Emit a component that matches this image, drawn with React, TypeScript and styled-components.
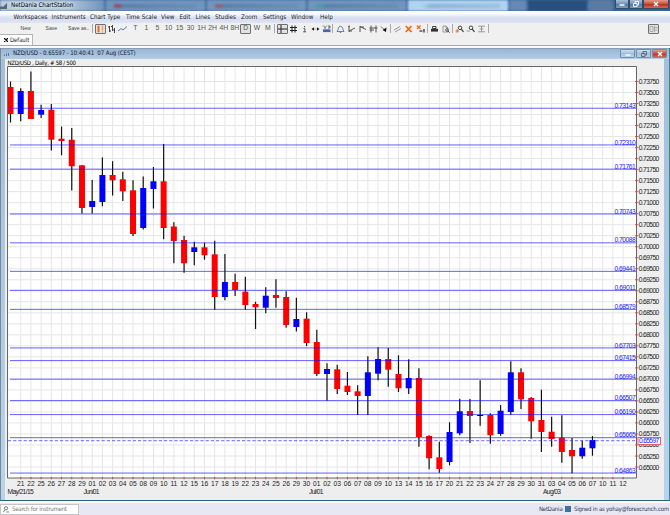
import React from "react";
import styled, { createGlobalStyle } from "styled-components";

const Global = createGlobalStyle`
  * { box-sizing: border-box; }
  body { margin: 0; overflow: hidden; background: #f0f0f0; }
`;

const ui = `"DejaVu Sans Condensed", "DejaVu Sans", sans-serif`;

const Window = styled.div`
  width: 670px;
  height: 515px;
  display: flex;
  flex-direction: column;
  background: #f0f0f0;
  font-family: ${ui};
  font-stretch: condensed;
  font-size: 6.3px;
  line-height: 1;
  color: #1b1b1b;
  white-space: nowrap;
`;

const TitleBar = styled.header`
  position: relative;
  flex: none;
  height: 11px;
  overflow: hidden;
  display: flex;
  justify-content: space-between;
  background: linear-gradient(#3f6a9c, #4d79aa 70%, #3a6492);
`;

const Backdrop = styled.div`
  position: absolute;
  inset: 0;
  display: flex;
  gap: 2px;
  filter: blur(1px);
`;

const GlassTab = styled.div<{ $w: number; $c: string }>`
  flex: none;
  width: ${(p) => p.$w}px;
  height: 11px;
  padding: 4px 8px 0 8px;
  background: ${(p) => p.$c};
`;

const Smudge = styled.div<{ $c: string }>`
  height: 4px;
  background: ${(p) => p.$c};
`;

const AppTitle = styled.div`
  position: relative;
  display: flex;
  align-items: center;
  gap: 3px;
  height: 11px;
  font-size: 6.3px;
  letter-spacing: -0.08px;
  color: #000;
  text-shadow: 0 0 4px #fff, 0 0 4px #dfeaf6;
`;

const WindowButtons = styled.div`
  position: relative;
  display: flex;
  width: 54px;
  height: 9px;
  margin-right: 1px;
`;

const WinButton = styled.button<{ $w: number; $close?: boolean; $light?: boolean }>`
  width: ${(p) => p.$w}px;
  height: 9px;
  padding: 0;
  border: 1px solid ${(p) => (p.$light ? "#6f8fae" : "#2d4c6e")};
  border-top-width: ${(p) => (p.$light ? 1 : 0)}px;
  border-radius: ${(p) => (p.$light ? "1px" : "0 0 2px 2px")};
  display: flex;
  align-items: center;
  justify-content: center;
  background: ${(p) =>
    p.$close
      ? "linear-gradient(#e09a88, #c8503c 50%, #b83222 55%, #d46a50)"
      : p.$light
        ? "linear-gradient(#cfdff0, #a3bfdb 50%, #b9d0e8)"
        : "linear-gradient(#a9bfd6, #7391b2 50%, #5a7ba0 55%, #7c9cbd)"};
`;

const MenuBar = styled.nav`
  flex: none;
  height: 12px;
  padding-left: 13.5px;
  display: flex;
  align-items: center;
  background: linear-gradient(#ffffff, #f4f6fb 30%, #dde3f2 50%, #d6ddef 70%, #dfe5f5);
`;

const MenuItem = styled.span<{ $w: number }>`
  flex: none;
  width: ${(p) => p.$w}px;
`;

const Toolbar = styled.div`
  flex: none;
  height: 11px;
  display: flex;
  align-items: center;
  font-family: "Liberation Sans", Arial, sans-serif;
`;

const TextButton = styled.span<{ $w: number }>`
  flex: none;
  width: ${(p) => p.$w}px;
  font-size: 5.1px;
  color: #444;
`;

const ToolGroup = styled.div<{ $ml?: number }>`
  flex: none;
  display: flex;
  margin-left: ${(p) => p.$ml ?? 0}px;
`;

const Tool = styled.span<{ $on?: boolean }>`
  flex: none;
  width: 11.05px;
  height: 10px;
  display: flex;
  align-items: center;
  justify-content: center;
  font-size: 6.8px;
  color: #555;
  border: ${(p) => (p.$on ? "1px solid #6f6f6f" : "0")};
  border-radius: 1px;
  background: ${(p) => (p.$on ? "#e2e2e2" : "none")};
`;

const Divider = styled.i<{ $ml?: number }>`
  flex: none;
  width: 1px;
  height: 9px;
  margin-left: ${(p) => p.$ml ?? 0}px;
  background: #a9a9a9;
`;

const TabStrip = styled.div`
  flex: none;
  height: 12px;
  display: flex;
  align-items: flex-end;
  border-bottom: 1px solid #a8a8a8;
`;

const Tab = styled.div`
  width: 33px;
  height: 11px;
  padding-left: 4px;
  display: flex;
  align-items: center;
  gap: 2px;
  font-size: 6px;
  letter-spacing: -0.08px;
  background: #fff;
  border: 1px solid #b5b5b5;
  border-left: 0;
  border-bottom: 0;
`;

const ChartWindow = styled.section`
  flex: none;
  height: 453px;
  display: flex;
  flex-direction: column;
  border-left: 1px solid #7d8790;
  border-right: 1px solid #3d8494;
  border-bottom: 1px solid #2c6470;
  background: linear-gradient(#a3bedb, #b9d3ee);
`;

const ChartTitle = styled.div`
  flex: none;
  height: 11px;
  padding: 0 2px 0 3px;
  display: flex;
  align-items: center;
  gap: 3px;
  font-size: 6.1px;
  letter-spacing: -0.1px;
  color: #15202c;
  background: linear-gradient(#7f93a8 0, #9ab7d5 1.5px, #b3cce6);
`;

const ChartButtons = styled.div`
  margin-left: auto;
  display: flex;
  gap: 1px;
`;

const ChartBody = styled.div`
  flex: 1;
  margin: 0 5px 0 4px;
  background: #eeeeee;
`;

const Spacer = styled.div`
  flex: none;
  height: 2px;
  background: #fafafa;
`;

const StatusBar = styled.footer`
  flex: 1;
  display: flex;
  align-items: center;
  justify-content: space-between;
  padding-right: 1px;
  font-size: 6px;
  background: #e8e8f5;
`;

const SearchBox = styled.div`
  width: 79px;
  height: 11px;
  padding-left: 2px;
  display: flex;
  align-items: center;
  gap: 3px;
  border: 1px solid #c3c3cc;
  background: #fff;
  color: #777;
  letter-spacing: -0.2px;
`;

const Account = styled.div`
  display: flex;
  align-items: center;
  gap: 2px;
  color: #2a3550;
  letter-spacing: -0.2px;
`;

const Swatch = styled.i`
  width: 6px;
  height: 6px;
  background: #41719f;
`;

type Candle = [string, number, number, number, number];

/* colour, high, body top, body bottom, low */
const candles: Candle[] = [
  ["r", 81.5, 87, 114, 122.5], ["b", 88.3, 91, 114, 121.3], ["r", 71.5, 91, 119, 119],
  ["b", 104.7, 110, 114.7, 118], ["r", 104, 109.7, 139.7, 150.5], ["r", 126.5, 138.7, 141, 155.3],
  ["r", 128, 139.7, 166.3, 190.5], ["r", 165, 165.3, 208, 213.5], ["b", 180, 201, 207, 213.5],
  ["b", 157.5, 175, 202, 206.3], ["r", 161.3, 175, 180.3, 195.5], ["r", 171.7, 179.3, 191.3, 201],
  ["r", 180.3, 190.3, 234, 236], ["b", 176.5, 188, 228, 229.5], ["b", 167, 181.3, 189, 208.5],
  ["r", 144, 181.3, 228, 239.3], ["r", 222.3, 226.5, 241, 263.3], ["r", 235.7, 240, 263.3, 272.7],
  ["b", 241.7, 247.3, 252, 265.3], ["r", 242.7, 247.3, 255.3, 259.7], ["r", 240.7, 254.3, 297, 309.7],
  ["b", 254, 282, 297, 300.3], ["r", 273.7, 282, 290, 296], ["r", 276.7, 291.7, 305, 309.7],
  ["r", 301.7, 304, 307.3, 329], ["b", 287.3, 295.7, 307.7, 313.3], ["r", 279.3, 295, 298, 307.7],
  ["r", 291.3, 297, 325, 327.7], ["b", 297.7, 319, 327, 331.5], ["r", 312.3, 318.7, 343, 346],
  ["r", 329.7, 342, 374, 376], ["b", 363.3, 369, 374, 400.7], ["r", 364.7, 369.3, 389, 394],
  ["r", 372, 385.7, 392, 395], ["r", 385.3, 391.3, 396, 415], ["b", 356.3, 372.3, 396, 415],
  ["b", 347.3, 359, 373.7, 380.3], ["r", 348, 359, 369.7, 386.7], ["r", 355.3, 374, 388.3, 392],
  ["b", 359.3, 378, 388.3, 394], ["r", 368.3, 378, 437, 446.7], ["r", 435.3, 436, 458.3, 469.3],
  ["r", 441.7, 457.3, 469, 472.7], ["b", 422.3, 432, 462, 465.3], ["b", 398.7, 411.3, 433.3, 435.3],
  ["r", 399, 411, 416, 443], ["k", 380.3, 415, 416, 425.7], ["r", 413.3, 415, 435.3, 443.7],
  ["b", 405, 410.7, 434, 435.7], ["b", 361.3, 372.3, 412, 414.7], ["r", 368.3, 372.3, 399.3, 409],
  ["r", 397, 398, 421.3, 438.7], ["r", 389.7, 420, 432, 452], ["r", 416.7, 431.7, 439, 446.7],
  ["r", 415.3, 437.7, 452, 462.7], ["r", 438, 450, 456.3, 473.3], ["b", 440.7, 447.7, 456.3, 458.7],
  ["b", 436, 440, 448.3, 455.7],
];

const fills: Record<string, string> = { r: "#ff0000", b: "#0000ff", k: "#000000" };

const days = (
  "21 22 25 26 27 28 29 01 02 03 04 05 08 09 10 11 12 15 16 17 18 19 22 23 24 25 26 29 30 " +
  "01 02 03 06 07 08 09 10 13 14 15 16 17 20 21 22 23 24 27 28 29 30 31 03 04 05 06 07 10 11 12"
).split(" ");

const levels = [
  "0.73143", "0.72310", "0.71761", "0.70743", "0.70088", "0.69441", "0.69011", "0.68579",
  "0.67703", "0.67415", "0.66994", "0.66507", "0.66190", "0.65665", "0.64863",
];

const xAt = (i: number) => 10.5 + i * 10.21;
const yAt = (price: number) => 81.5 + ((0.7375 - price) / 0.0025) * 11.015;

const ticks = Array.from({ length: 36 }, (_, i) => 0.7375 - i * 0.0025);

const ChartSvg = styled.svg`
  display: block;
  font-family: "Liberation Sans", Arial, sans-serif;
  font-size: 6.7px;
`;

const PriceChart = () => (
  <ChartSvg width="659" height="441" viewBox="5 59 659 441">
    <text x="7.5" y="65" textLength="68.5" fill="#000" fontFamily="DejaVu Sans Condensed, DejaVu Sans" fontSize="6">
      NZD/USD , Daily, # 58 / 500
    </text>
    <rect x="7.5" y="66.5" width="629" height="411.5" fill="#fff" />
    {ticks.map((p) => (
      <line key={p} x1="8" x2="636" y1={yAt(p)} y2={yAt(p)} stroke="#e6e6e6" />
    ))}
    {days.map((_, i) => (
      <line key={i} x1={xAt(i + 1)} x2={xAt(i + 1)} y1="67" y2="478" stroke="#e6e6e6" />
    ))}
    {candles.map(([c, hi, top, bottom, lo], i) => (
      <g key={i}>
        <line x1={xAt(i)} x2={xAt(i)} y1={hi} y2={lo} stroke="#111" strokeWidth="1.2" />
        <rect x={xAt(i) - 3} width="6" y={top} height={bottom - top} fill={fills[c]} />
      </g>
    ))}
    {levels.map((l) => (
      <g key={l}>
        <line x1="10" x2="636" y1={yAt(+l)} y2={yAt(+l)} stroke="#0000ff" strokeOpacity="0.62" />
        <text x="614.5" y={yAt(+l) - 0.4} textLength="21.3" fill="#2020ff">{l}</text>
      </g>
    ))}
    <line x1="8" x2="636" y1="440.7" y2="440.7" stroke="#2a2aff" strokeOpacity="0.7" strokeDasharray="3.2 2" />
    <path d="M7.5 478V66.5H636.5V478Z" fill="none" stroke="#666" />
    {ticks.map((p) => (
      <g key={p}>
        <line x1="635" x2="638.5" y1={yAt(p)} y2={yAt(p)} stroke="#d04040" strokeWidth="0.8" />
        <text x="638.8" y={yAt(p) + 2.5} textLength="20.4" fill="#222">{p.toFixed(5)}</text>
      </g>
    ))}
    {days.map((d, i) => (
      <g key={i}>
        <line x1={xAt(i + 1)} x2={xAt(i + 1)} y1="477" y2="479.3" stroke="#d04040" />
        <text x={xAt(i + 1)} y="486" textAnchor="middle" fill="#222">{d}</text>
      </g>
    ))}
    <text x="7.5" y="493.9" textLength="26.3" fill="#222">May/21/15</text>
    <text x="83.5" y="493.9" textLength="16" fill="#222">Jun/01</text>
    <text x="309" y="493.9" textLength="14.5" fill="#222">Jul/01</text>
    <text x="543" y="493.9" textLength="18" fill="#222">Aug/03</text>
    <rect x="638" y="437.5" width="22.5" height="7" fill="#fff" stroke="#f05050" strokeWidth="0.9" />
    <text x="639" y="443.4" textLength="20.2" fill="#2020ff">0.65597</text>
  </ChartSvg>
);

const Glyph = ({ children, w = 9 }: { children: React.ReactNode; w?: number }) => (
  <svg width={w} height="8" viewBox={`0 0 ${w} 8`} fill="none" stroke="#444" strokeWidth="1">
    {children}
  </svg>
);

const menus: [string, number][] = [
  ["Workspaces", 38], ["Instruments", 38.5], ["Chart Type", 36], ["Time Scale", 35], ["View", 18.5],
  ["Edit", 16], ["Lines", 19.5], ["Studies", 26], ["Zoom", 22], ["Settings", 28], ["Window", 29], ["Help", 15],
];

const periods = ["T", "1", "5", "10", "15", "30", "1H", "2H", "4H", "8H", "D", "W", "M"];

export default function App() {
  return (
    <>
      <Global />
      <Window>
        <TitleBar>
          <Backdrop>
            <GlassTab $w={104} $c="linear-gradient(90deg,#b9cde2,#b0c7de 65%,#7094bc)" />
            <GlassTab $w={99} $c="#7095be"><Smudge $c="linear-gradient(90deg,#94506c 7px,#5b80a8 8px,#6a8fb7)" /></GlassTab>
            <GlassTab $w={99} $c="#7095be"><Smudge $c="linear-gradient(90deg,#94607c 7px,#5b80a8 8px,#6a8fb7)" /></GlassTab>
            <GlassTab $w={98} $c="#7095be"><Smudge $c="linear-gradient(90deg,#4c9c9c 8px,#5b80a8 9px,#6a8fb7)" /></GlassTab>
            <GlassTab $w={100} $c="#afd3f3"><Smudge $c="linear-gradient(90deg,#afd3f3 6px,#8fb2d6 14px,#9dc0e2)" /></GlassTab>
            <GlassTab $w={15} $c="#6389b4" />
            <GlassTab $w={59} $c="#27507f" />
            <GlassTab $w={23} $c="#5b7ca2" />
            <GlassTab $w={60} $c="#34608f" />
          </Backdrop>
          <AppTitle>
            <svg width="8" height="8" viewBox="0 0 8 8"><path d="M0 7V5L2 4L3 5L7 1V7Z" fill="#54667a" /></svg>
            NetDania ChartStation
          </AppTitle>
          <WindowButtons>
            <WinButton $w={14}><Glyph w={8}><path d="M1.5 5H6.5" stroke="#fff" strokeWidth="1.5" /></Glyph></WinButton>
            <WinButton $w={14}><Glyph w={8}><path d="M1.5 3.5H5V6.5H1.5ZM3 3.5V1.5H6.5V5H5" stroke="#fff" strokeWidth=".9" /></Glyph></WinButton>
            <WinButton $w={26} $close><Glyph w={8}><path d="M2 2L6 6M6 2L2 6" stroke="#fff" strokeWidth="1.4" /></Glyph></WinButton>
          </WindowButtons>
        </TitleBar>
        <MenuBar>
          {menus.map(([m, w]) => <MenuItem key={m} $w={w}>{m}</MenuItem>)}
        </MenuBar>
        <Toolbar>
          <ToolGroup $ml={20.5}>
            <TextButton $w={25}>New</TextButton>
            <TextButton $w={22.5}>Save</TextButton>
            <TextButton $w={24}>Save as..</TextButton>
          </ToolGroup>
          <Divider />
          <ToolGroup $ml={1.5}>
            <Tool $on><Glyph><path d="M2.5 0V8M6.5 0V8" stroke="#f8a060" strokeWidth=".8" /><path d="M2.5 1V7" stroke="#f26a10" strokeWidth="2" /><path d="M6.5 1.5V5" stroke="#f8a060" strokeWidth="1.5" /></Glyph></Tool>
            <Tool><Glyph><path d="M2.5 1V7M1 2H2.5M5.5 0V6M4 1.5H5.5M5.5 5H7M7.5 3V8M2.5 6H4" /></Glyph></Tool>
            <Tool><Glyph><path d="M0 6L3 3.5L5 5L9 1.5" stroke="#5580b0" /></Glyph></Tool>
          </ToolGroup>
          <ToolGroup $ml={2.2}>
            {periods.map((p) => <Tool key={p} $on={p === "D"}>{p}</Tool>)}
          </ToolGroup>
          <Divider $ml={0.5} />
          <ToolGroup $ml={2}>
            <Tool $on><Glyph><path d="M3 0V8M0 4H9" stroke="#222" /></Glyph></Tool>
            <Tool><Glyph><path d="M3 0.5V7.5M6 0.5V7.5M1 2.5H8M1 5.5H8" stroke="#222" /></Glyph></Tool>
            <Tool><Glyph><path d="M3.5 3.5H4.8V6.5M3.2 6.8H6M4.5 1V2.2" stroke="#555" /></Glyph></Tool>
            <Tool><Glyph><path d="M1 4H8" stroke="#999" strokeWidth=".7" /><path d="M0.5 4L3 2.3V5.7ZM8.5 4L6 2.3V5.7Z" fill="#222" stroke="none" /></Glyph></Tool>
            <Tool><Glyph><path d="M1 0.5L3 2.5L5 .5M3 2.5V4M6 1H8V3H6" stroke="#444" strokeWidth=".8" /><path d="M1 5.7H8.5" stroke="#4668b4" strokeWidth="2.8" /></Glyph></Tool>
          </ToolGroup>
          <Divider />
          <ToolGroup $ml={1.5}>
            <Tool><Glyph><path d="M1 6.5C2.5 5 2 1.2 4.5 1.2S6.5 5 8 6.5ZM3.8 7.5H5.2" stroke="#6484a8" /></Glyph></Tool>
            <Tool><Glyph><path d="M2 1V7M1 1.5L3 1M2 6L8 3M2 6H5" stroke="#555" /></Glyph></Tool>
            <Tool><Glyph><path d="M2 1V7M2 1.5L8 4.5M2 2H6" stroke="#555" /></Glyph></Tool>
            <Tool><Glyph><path d="M2 0.5V7.5M7 0.5V7.5M0.5 3H8.5M0.5 5H5" stroke="#555" /></Glyph></Tool>
            <Tool><Glyph><path d="M0.5 1.5L4 4" stroke="#888" /><path d="M2.5 5L6.5 2.5L6 7Z" fill="#111" stroke="none" /></Glyph></Tool>
          </ToolGroup>
          <Divider />
          <ToolGroup $ml={1.5}>
            <Tool><Glyph><path d="M1 5L7 1.5M2 7L8 3.5" stroke="#999" /></Glyph></Tool>
            <Tool><Glyph><path d="M1.8 1L7.5 7M7.5 1L1.8 7" stroke="#f26a10" strokeWidth="1.8" /></Glyph></Tool>
            <Tool><Glyph><path d="M1 .5L4.5 4M4.5 .5L1 4" stroke="#f26a10" strokeWidth="1.2" /><path d="M3.5 6H6.5M8 4V7.5" stroke="#555" strokeWidth="1.6" /></Glyph></Tool>
          </ToolGroup>
          <Divider $ml={1} />
          <ToolGroup $ml={1}>
            <Tool><Glyph><path d="M2.5 1.5H6V3.5H2.5Z" /><path d="M1 5.2H8" stroke="#333" strokeWidth="2.8" /></Glyph></Tool>
            <Tool><Glyph><path d="M2 1H5L7 3V7H2ZM5 1V3H7" stroke="#888" strokeWidth=".8" /><circle cx="6" cy="5" r="1.3" stroke="#555" /><path d="M7 6L8.5 7.7" /></Glyph></Tool>
          </ToolGroup>
          <Divider $ml={1} />
          <ToolGroup $ml={1.5}>
            <Tool><Glyph><circle cx="5" cy="2.8" r="1.8" /><path d="M6.3 4.2L8.5 6.8" strokeWidth="1.3" /><path d="M0.5 6H4M2.2 4.2V7.8" stroke="#f26a10" strokeWidth="1.1" /></Glyph></Tool>
            <Tool><Glyph><circle cx="5" cy="2.8" r="1.8" /><path d="M6.3 4.2L8.5 6.8" strokeWidth="1.3" /><path d="M0.5 6H4" stroke="#7aa0cc" /></Glyph></Tool>
            <Tool><Glyph><path d="M1 1.2H8M1 6.8H8M4.5 1V7M2.5 4H6.5" stroke="#999" /></Glyph></Tool>
          </ToolGroup>
          <Divider $ml={1} />
          <ToolGroup $ml={158.5}>
            <Tool $on><Glyph><path d="M1 1.5H4V6.5H1ZM5.5 1V7M5.5 2.5H8.5M5.5 5H8.5" stroke="#aaa" /></Glyph></Tool>
          </ToolGroup>
        </Toolbar>
        <TabStrip>
          <Tab>
            <svg width="4" height="4" viewBox="0 0 4 4"><path d="M0 0L4 4M4 0L0 4" stroke="#111" strokeWidth="1.3" /></svg>
            Default
          </Tab>
        </TabStrip>
        <Spacer />
        <ChartWindow>
          <ChartTitle>
            <svg width="6" height="4" viewBox="0 0 6 4"><path d="M.5 4V2.5M2.5 4V1.5M4.5 4V1" stroke="#5d7892" /></svg>
            NZD/USD - 0.65597 - 10:40:41&nbsp; 07 Aug (CEST)
            <ChartButtons>
              <WinButton $light $w={15}><Glyph w={8}><path d="M1.5 5H6.5" stroke="#f7f7f7" strokeWidth="1.6" /></Glyph></WinButton>
              <WinButton $light $w={15}><Glyph w={8}><path d="M1.5 3.5H5V6.5H1.5ZM3 3.5V1.5H6.5V5H5" stroke="#5d6f83" /></Glyph></WinButton>
              <WinButton $light $close $w={15}><Glyph w={8}><path d="M2 2L6 6M6 2L2 6" stroke="#fff" strokeWidth="1.4" /></Glyph></WinButton>
            </ChartButtons>
          </ChartTitle>
          <ChartBody><PriceChart /></ChartBody>
        </ChartWindow>
        <Spacer />
        <StatusBar>
          <SearchBox>
            <svg width="6" height="7" viewBox="0 0 6 7" fill="none" stroke="#777"><circle cx="3" cy="2.3" r="1.6" /><path d="M2 4L0 6.3M3.5 6H6" /></svg>
            Search for instrument
          </SearchBox>
          <Account>NetDania<Swatch />&nbsp;Signed in as yohay@forexcrunch.com</Account>
        </StatusBar>
      </Window>
    </>
  );
}
